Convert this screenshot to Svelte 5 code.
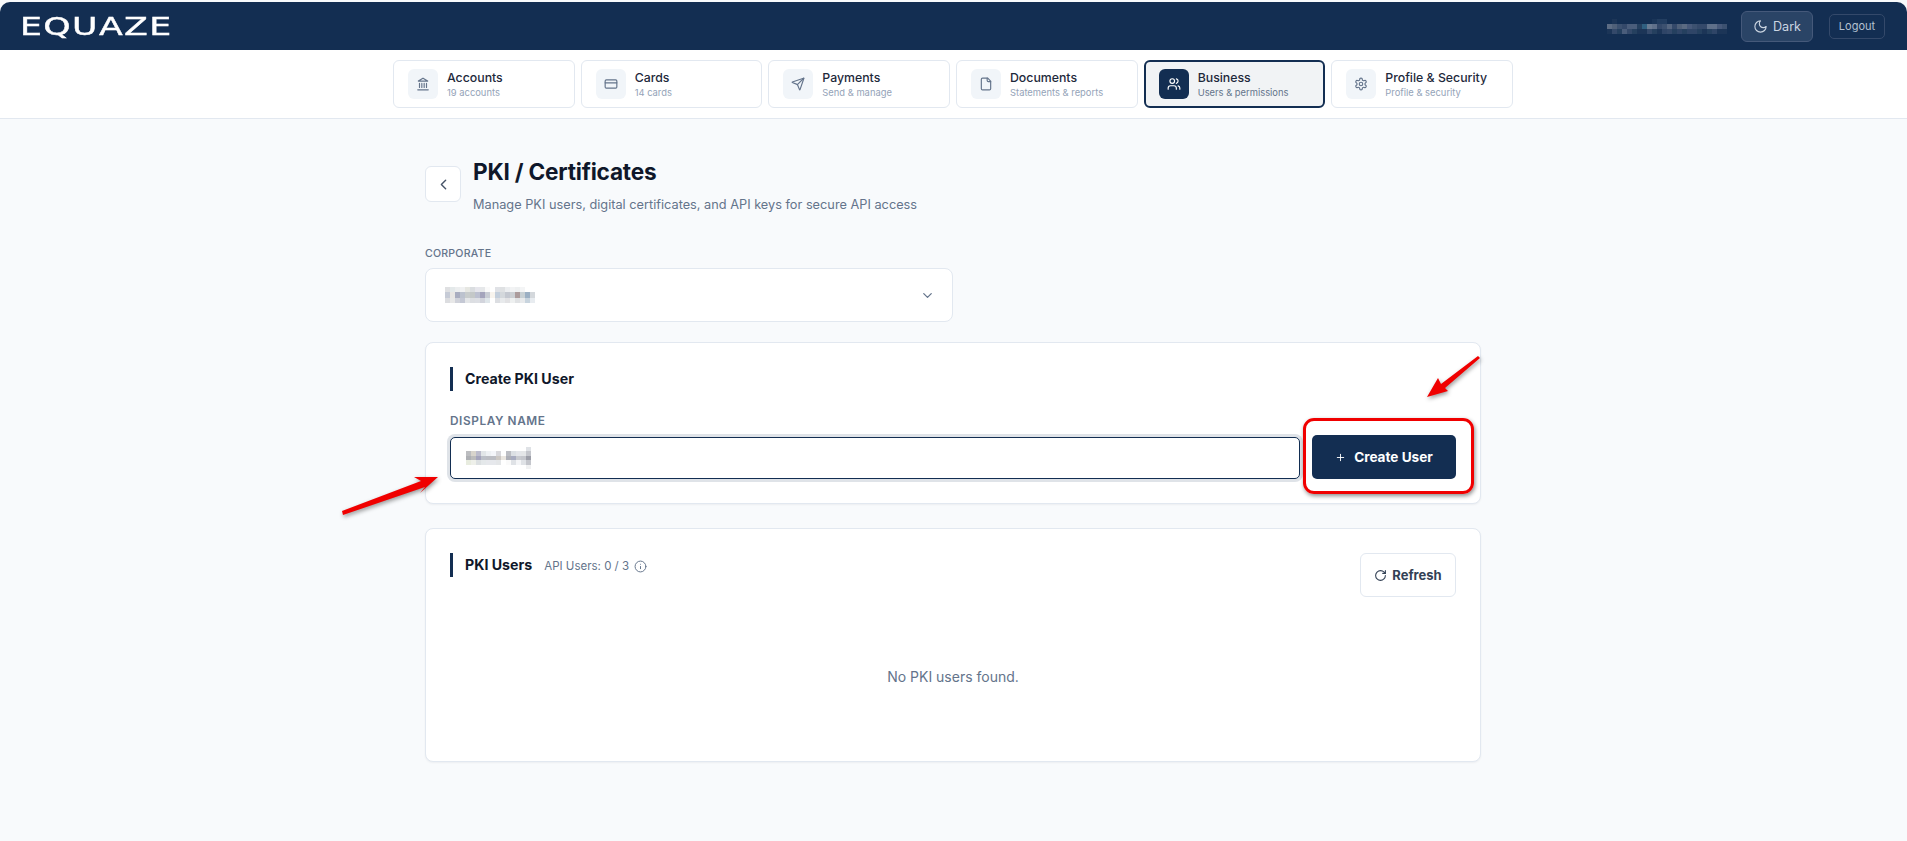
<script lang="ts">
  const tabs = [
    { key: "bank", title: "Accounts", sub: "19 accounts" },
    { key: "card", title: "Cards", sub: "14 cards" },
    { key: "send", title: "Payments", sub: "Send & manage" },
    { key: "file", title: "Documents", sub: "Statements & reports" },
    { key: "users", title: "Business", sub: "Users & permissions", active: true },
    { key: "gear", title: "Profile & Security", sub: "Profile & security" },
  ];

  // pixelated (redacted) values from the screenshot
  const nameBlur = [
    "132e52 1c3557 132e52 132e52 132e52 132e52 132e52 132e52 132e52 1a3558 223d60 223d60 132e52 132e52 132e52 132e52 132e52 132e52 132e52 132e52 132e52 132e52 132e52 132e52",
    "5c6c84 4f6079 3c5170 34496a 4a5d7b 4a5d7b 25405f 2f5f80 6a7b92 5f708a 34496a 3c5170 556680 34496a 4f6079 5a6a82 47597a 3c5170 34496a 34496a 5f708a 5f708a 47597a 3c5170",
    "1c3557 34496a 25405f 4a5d7b 34496a 25405f 1c3557 1c3557 34496a 25405f 1c3557 2f4567 34496a 25405f 2f4567 25405f 2f4567 2f4567 25405f 1c3557 25405f 2f4567 1c3557 1c3557",
  ];
  const corpBlur = [
    "dfe0e2 e4e9ea eceeef f0f1f2 e6e7e2 dadde0 e6e6ec e6e8ea fafafa ffffff e0e2e6 dfe1e3 eceef0 f2f3f4 eef0f1 f4f5f6 ffffff ffffff",
    "c6cbd6 e8e6e4 a9adc0 bcc2ce c8cccc c4c8c8 bcc0d0 a4a4bc c8ccd4 f8f4ee c4cfdc d4d8dc c4c8d0 ccd0d4 ac9c9c c8d0d4 9cb0c4 d4d8dc",
    "dcdde0 e8e8e8 d0d2da c4c8d4 e4e6e8 dcdee2 dddfe4 d2d4dc dfe6ea ffffff dcdee2 e8eaec e2e2e4 eef0f0 e0e2e4 e8eaec c8d4de e8ecf0",
  ];
  const inputBlur = [
    "ffffff ffffff ffffff ffffff ffffff ffffff ffffff ffffff ffffff ffffff ffffff ffffff dfe2e6",
    "bcbdc0 d8d4cc bcbccc e2e6e8 eef1f4 f4f6fa d8d8dc ffffff bcbec4 dce0e4 e4e6ea e4e6e8 c4c6cc",
    "aeb0b4 bcbcbc a4a4bc bcc0c8 bcbec4 bcbec4 ccc8c4 eae6e0 aeb0b8 a8acc0 c8cacf c4c6cc 9c9ea8",
    "e8ecdf eef0ea dce0e2 e4e8ea e6e8ec e6e8ec e4e6e8 ffffff fafafa dfe2e6 f4f5f7 dfe2e6 c4c6cc",
    "ffffff ffffff ffffff ffffff ffffff ffffff ffffff ffffff ffffff ffffff ffffff ffffff f0f1f2",
  ];
  const cells = (rows: string[]) =>
    rows.flatMap((r) => r.split(" ").map((c) => "#" + c));
</script>

{#snippet icon(key: string)}
  <svg class="ico" viewBox="0 0 24 24" fill="none" stroke="currentColor" stroke-width="2" stroke-linecap="round" stroke-linejoin="round">
    {#if key === "bank"}
      <path d="M3 22h18M6 18v-7M10 18v-7M14 18v-7M18 18v-7" />
      <path d="M12 2l8 5H4z" />
    {:else if key === "card"}
      <rect x="2" y="5" width="20" height="14" rx="2" />
      <path d="M2 10h20" />
    {:else if key === "send"}
      <path d="M14.536 21.686a.5.5 0 0 0 .937-.024l6.5-19a.496.496 0 0 0-.635-.635l-19 6.5a.5.5 0 0 0-.024.937l7.93 3.18a2 2 0 0 1 1.112 1.11z" />
      <path d="m21.854 2.147-10.94 10.939" />
    {:else if key === "file"}
      <path d="M15 2H6a2 2 0 0 0-2 2v16a2 2 0 0 0 2 2h12a2 2 0 0 0 2-2V7Z" />
      <path d="M14 2v4a2 2 0 0 0 2 2h4" />
    {:else if key === "users"}
      <path d="M16 21v-2a4 4 0 0 0-4-4H6a4 4 0 0 0-4 4v2" />
      <circle cx="9" cy="7" r="4" />
      <path d="M22 21v-2a4 4 0 0 0-3-3.87M16 3.13a4 4 0 0 1 0 7.75" />
    {:else if key === "gear"}
      <path d="M12.22 2h-.44a2 2 0 0 0-2 2v.18a2 2 0 0 1-1 1.73l-.43.25a2 2 0 0 1-2 0l-.15-.08a2 2 0 0 0-2.73.73l-.22.38a2 2 0 0 0 .73 2.73l.15.1a2 2 0 0 1 1 1.72v.51a2 2 0 0 1-1 1.74l-.15.09a2 2 0 0 0-.73 2.73l.22.38a2 2 0 0 0 2.73.73l.15-.08a2 2 0 0 1 2 0l.43.25a2 2 0 0 1 1 1.73V20a2 2 0 0 0 2 2h.44a2 2 0 0 0 2-2v-.18a2 2 0 0 1 1-1.73l.43-.25a2 2 0 0 1 2 0l.15.08a2 2 0 0 0 2.73-.73l.22-.39a2 2 0 0 0-.73-2.73l-.15-.08a2 2 0 0 1-1-1.74v-.5a2 2 0 0 1 1-1.74l.15-.09a2 2 0 0 0 .73-2.73l-.22-.38a2 2 0 0 0-2.73-.73l-.15.08a2 2 0 0 1-2 0l-.43-.25a2 2 0 0 1-1-1.73V4a2 2 0 0 0-2-2z" />
      <circle cx="12" cy="12" r="3" />
    {:else if key === "moon"}
      <path d="M12 3a6 6 0 0 0 9 9 9 9 0 1 1-9-9Z" />
    {:else if key === "left"}
      <path d="m15 18-6-6 6-6" />
    {:else if key === "down"}
      <path d="m6 9 6 6 6-6" />
    {:else if key === "plus"}
      <path d="M5 12h14M12 5v14" />
    {:else if key === "refresh"}
      <path d="M21 12a9 9 0 1 1-9-9c2.52 0 4.93 1 6.74 2.74L21 8" />
      <path d="M21 3v5h-5" />
    {:else if key === "info"}
      <circle cx="12" cy="12" r="10" />
      <path d="M12 16v-4M12 8h.01" />
    {/if}
  </svg>
{/snippet}

{#snippet mosaic(rows: string[], cls: string)}
  <span class="mosaic {cls}" aria-hidden="true">
    {#each cells(rows) as c}
      <i style="background:{c}"></i>
    {/each}
  </span>
{/snippet}

<div class="page">
  <header class="topbar">
    <span class="logo">EQUAZE</span>
    <div class="top-right">
      {@render mosaic(nameBlur, "m-name")}
      <button class="dark-btn">{@render icon("moon")} Dark</button>
      <button class="logout-btn">Logout</button>
    </div>
  </header>

  <nav class="tabs">
    <div class="tabs-inner">
      {#each tabs as t}
        <div class="tab" class:active={t.active}>
          <span class="tab-icon">{@render icon(t.key)}</span>
          <span class="tab-text">
            <span class="tab-title">{t.title}</span>
            <span class="tab-sub">{t.sub}</span>
          </span>
        </div>
      {/each}
    </div>
  </nav>

  <main class="content">
    <div class="page-head">
      <button class="back">{@render icon("left")}</button>
      <div>
        <h1>PKI / Certificates</h1>
        <p>Manage PKI users, digital certificates, and API keys for secure API access</p>
      </div>
    </div>

    <div class="corp">
      <div class="corp-label">CORPORATE</div>
      <div class="select">
        {@render mosaic(corpBlur, "m-corp")}
        {@render icon("down")}
      </div>
    </div>

    <section class="card create">
      <h2 class="card-title">Create PKI User</h2>
      <div class="field-label">DISPLAY NAME</div>
      <div class="form-row">
        <div class="input">{@render mosaic(inputBlur, "m-input")}</div>
        <button class="create-btn">{@render icon("plus")} Create User</button>
      </div>
    </section>

    <section class="card users">
      <div class="users-head">
        <div class="users-title">
          <h2 class="card-title">PKI Users</h2>
          <span class="quota">API Users: 0 / 3 {@render icon("info")}</span>
        </div>
        <button class="refresh">{@render icon("refresh")} Refresh</button>
      </div>
      <div class="empty">No PKI users found.</div>
    </section>
  </main>

  <!-- review annotations painted over the screenshot -->
  <div class="red-box"></div>
  <svg class="marks" width="1907" height="841" viewBox="0 0 1907 841">
    <polygon points="342,511 343,515 425,487 420,493 438,477 414,477 421,481" />
    <polygon points="1478,356 1480,358 1445,388 1448,391 1427,397 1438,378 1441,384" />
  </svg>
</div>

<style>
  :global(body) {
    background: #eef1f5;
  }
  .page {
    position: relative;
    height: 841px;
    padding: 2px 1px 0 0;
    box-sizing: border-box;
    overflow: hidden;
    background: #f8fafc;
    font-family: Inter, "Noto Sans", sans-serif;
    color: #0f172a;
  }
  button {
    font-family: inherit;
    cursor: pointer;
  }
  h1,
  h2,
  p {
    margin: 0;
  }
  .ico {
    width: 1em;
    height: 1em;
    flex-shrink: 0;
    display: block;
  }

  .mosaic {
    display: grid;
    grid-auto-rows: 5px;
    flex-shrink: 0;
  }
  .mosaic i {
    display: block;
  }
  .m-name {
    grid-template-columns: repeat(24, 5px);
  }
  .m-corp {
    grid-template-columns: repeat(18, 5px);
    grid-auto-rows: 5.4px;
  }
  .m-input {
    grid-template-columns: repeat(13, 5px);
    grid-auto-rows: 4.6px;
  }

  .topbar {
    height: 48px;
    margin-right: -1px;
    background: #132e52;
    border-radius: 10px 10px 0 0;
    display: flex;
    align-items: center;
    justify-content: space-between;
    padding: 0 22px 0 20px;
  }
  .logo {
    font-family: "DejaVu Sans", sans-serif;
    font-size: 25px;
    line-height: 1;
    color: #fff;
    letter-spacing: 1px;
    -webkit-text-stroke: 0.4px #fff;
    transform: scaleX(1.39);
    transform-origin: left center;
  }
  .top-right {
    display: flex;
    align-items: center;
  }
  .dark-btn {
    display: flex;
    align-items: center;
    gap: 5px;
    width: 72px;
    height: 31px;
    justify-content: center;
    margin-left: 14px;
    padding: 0;
    font-size: 12.6px;
    color: #cbd5e1;
    background: #2a4466;
    border: 1px solid #45597a;
    border-radius: 6px;
  }
  .dark-btn .ico {
    width: 15px;
    height: 15px;
    stroke-width: 1.8;
  }
  .logout-btn {
    width: 56px;
    height: 25px;
    margin-left: 16px;
    padding: 0;
    font-size: 11px;
    color: #b4c0d0;
    background: transparent;
    border: 1px solid #34496a;
    border-radius: 5px;
  }

  .tabs {
    height: 69px;
    margin-right: -1px;
    box-sizing: border-box;
    padding: 10px 1px 0 0;
    background: #fff;
    border-bottom: 1px solid #e2e8f0;
  }
  .tabs-inner {
    width: 1120px;
    margin: 0 auto;
    display: grid;
    grid-template-columns: repeat(6, 1fr);
    gap: 6px;
  }
  .tab {
    height: 48px;
    box-sizing: border-box;
    display: flex;
    align-items: center;
    gap: 9px;
    padding: 0 14px;
    background: #fff;
    border: 1px solid #e2e8f0;
    border-radius: 6px;
  }
  .tab.active {
    background: #f1f3f5;
    border: 2px solid #132e52;
    padding: 0 13px;
  }
  .tab-icon {
    width: 30px;
    height: 30px;
    display: flex;
    align-items: center;
    justify-content: center;
    font-size: 14px;
    color: #64748b;
    background: #f1f5f9;
    border-radius: 6px;
  }
  .active .tab-icon {
    color: #fff;
    background: #132e52;
  }
  .tab-text {
    display: flex;
    flex-direction: column;
  }
  .tab-title {
    font-size: 12.3px;
    font-weight: 500;
    line-height: 16px;
    color: #1e293b;
  }
  .tab-sub {
    font-size: 9.4px;
    line-height: 13px;
    color: #94a3b8;
  }
  .active .tab-sub {
    color: #64748b;
  }

  .content {
    width: 1056px;
    margin: 0 auto;
    padding-top: 38px;
  }
  .page-head {
    display: flex;
    align-items: flex-start;
    gap: 12px;
  }
  .back {
    width: 36px;
    height: 36px;
    margin-top: 9px;
    padding: 0;
    display: flex;
    align-items: center;
    justify-content: center;
    font-size: 17px;
    color: #475569;
    background: #fff;
    border: 1px solid #e2e8f0;
    border-radius: 6px;
  }
  h1 {
    font-size: 22.6px;
    font-weight: 700;
    line-height: 30px;
    letter-spacing: -0.2px;
  }
  .page-head p {
    margin-top: 8px;
    font-size: 12.75px;
    line-height: 20px;
    color: #64748b;
  }

  .corp {
    margin-top: 32px;
  }
  .corp-label {
    font-size: 10.6px;
    font-weight: 500;
    line-height: 14px;
    letter-spacing: 0.2px;
    color: #64748b;
  }
  .select {
    width: 528px;
    height: 54px;
    margin-top: 7px;
    box-sizing: border-box;
    display: flex;
    align-items: center;
    justify-content: space-between;
    padding: 0 17px 0 19px;
    font-size: 15px;
    color: #64748b;
    background: #fff;
    border: 1px solid #e2e8f0;
    border-radius: 8px;
  }

  .card {
    background: #fff;
    border: 1px solid #e2e8f0;
    border-radius: 8px;
    box-shadow: 0 1px 2px rgba(15, 23, 42, 0.05);
    box-sizing: border-box;
  }
  .card-title {
    padding-left: 12px;
    border-left: 3px solid #132e52;
    font-size: 14.2px;
    font-weight: 700;
    line-height: 24px;
    color: #0f172a;
  }
  .create {
    height: 162px;
    margin-top: 20px;
    padding: 24px 24px 0;
  }
  .field-label {
    margin-top: 23px;
    font-size: 11.8px;
    font-weight: 600;
    line-height: 14px;
    letter-spacing: 0.6px;
    color: #64748b;
  }
  .form-row {
    display: flex;
    align-items: flex-end;
    gap: 12px;
    margin-top: 7px;
  }
  .input {
    flex: 1;
    height: 42px;
    box-sizing: border-box;
    display: flex;
    align-items: center;
    padding-left: 15px;
    background: #fff;
    border: 1px solid #132e52;
    border-radius: 5px;
    box-shadow: 0 0 0 3px #dfe3e8;
  }
  .create-btn {
    width: 144px;
    height: 44px;
    padding: 0;
    display: flex;
    align-items: center;
    justify-content: center;
    gap: 8px;
    font-size: 13.6px;
    font-weight: 700;
    color: #fff;
    background: #132e52;
    border: none;
    border-radius: 5px;
  }
  .create-btn .ico {
    width: 11px;
    height: 11px;
  }
  .users {
    height: 234px;
    margin-top: 24px;
    padding: 24px 24px 0;
  }
  .users-head {
    display: flex;
    justify-content: space-between;
    align-items: flex-start;
  }
  .users-title {
    display: flex;
    align-items: center;
    gap: 12px;
  }
  .quota {
    display: flex;
    align-items: center;
    gap: 5px;
    padding-top: 2px;
    font-size: 11.5px;
    color: #64748b;
  }
  .quota .ico {
    width: 13px;
    height: 13px;
    stroke-width: 1.8;
  }
  .refresh {
    width: 96px;
    height: 44px;
    padding: 0;
    display: flex;
    align-items: center;
    justify-content: center;
    gap: 5px;
    font-size: 13px;
    font-weight: 700;
    color: #334155;
    background: #fff;
    border: 1px solid #e2e8f0;
    border-radius: 6px;
  }
  .refresh .ico {
    width: 13px;
    height: 13px;
  }
  .empty {
    margin-top: 70px;
    text-align: center;
    font-size: 14px;
    line-height: 20px;
    color: #64748b;
  }

  .red-box {
    position: absolute;
    left: 1303px;
    top: 418px;
    width: 171px;
    height: 76px;
    box-sizing: border-box;
    border: 3px solid #f00000;
    border-radius: 11px;
    box-shadow: 1px 2px 4px rgba(0, 0, 0, 0.45);
  }
  .marks {
    position: absolute;
    left: 0;
    top: 0;
    pointer-events: none;
    filter: drop-shadow(1px 2px 2px rgba(0, 0, 0, 0.4));
  }
  .marks polygon {
    fill: #f00000;
  }
</style>
